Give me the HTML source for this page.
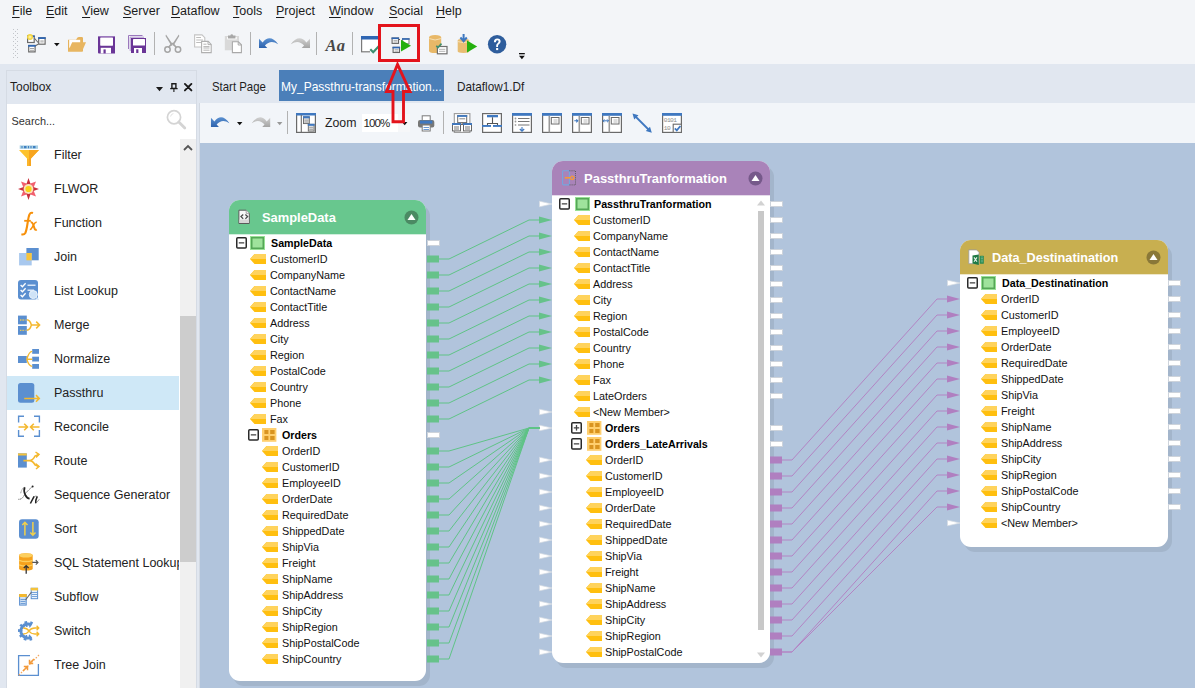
<!DOCTYPE html><html><head><meta charset="utf-8"><style>
*{margin:0;padding:0;box-sizing:border-box}
html,body{width:1195px;height:688px;overflow:hidden}
body{background:#f3f5f8;font-family:"Liberation Sans", sans-serif;position:relative;color:#1e1e1e}
.t{position:absolute;white-space:nowrap}
.a{position:absolute}
svg{position:absolute;overflow:visible}
u{text-decoration:none;border-bottom:1px solid currentColor}
</style></head><body><div class="t" style="left:12px;top:3px;font-size:12.5px;line-height:16px;color:#1b1b1b"><span style="text-decoration:underline;text-underline-offset:2px">F</span>ile</div>
<div class="t" style="left:46px;top:3px;font-size:12.5px;line-height:16px;color:#1b1b1b"><span style="text-decoration:underline;text-underline-offset:2px">E</span>dit</div>
<div class="t" style="left:82px;top:3px;font-size:12.5px;line-height:16px;color:#1b1b1b"><span style="text-decoration:underline;text-underline-offset:2px">V</span>iew</div>
<div class="t" style="left:123px;top:3px;font-size:12.5px;line-height:16px;color:#1b1b1b"><span style="text-decoration:underline;text-underline-offset:2px">S</span>erver</div>
<div class="t" style="left:171px;top:3px;font-size:12.5px;line-height:16px;color:#1b1b1b"><span style="text-decoration:underline;text-underline-offset:2px">D</span>ataflow</div>
<div class="t" style="left:233px;top:3px;font-size:12.5px;line-height:16px;color:#1b1b1b"><span style="text-decoration:underline;text-underline-offset:2px">T</span>ools</div>
<div class="t" style="left:276px;top:3px;font-size:12.5px;line-height:16px;color:#1b1b1b"><span style="text-decoration:underline;text-underline-offset:2px">P</span>roject</div>
<div class="t" style="left:329px;top:3px;font-size:12.5px;line-height:16px;color:#1b1b1b"><span style="text-decoration:underline;text-underline-offset:2px">W</span>indow</div>
<div class="t" style="left:389px;top:3px;font-size:12.5px;line-height:16px;color:#1b1b1b"><span style="text-decoration:underline;text-underline-offset:2px">S</span>ocial</div>
<div class="t" style="left:436px;top:3px;font-size:12.5px;line-height:16px;color:#1b1b1b"><span style="text-decoration:underline;text-underline-offset:2px">H</span>elp</div>
<svg style="left:13px;top:29px" width="6" height="30"><rect x="0" y="0" width="1" height="1" fill="#c2c5ca"/><rect x="4" y="0" width="1" height="1" fill="#c2c5ca"/><rect x="0" y="4" width="1" height="1" fill="#c2c5ca"/><rect x="4" y="4" width="1" height="1" fill="#c2c5ca"/><rect x="0" y="8" width="1" height="1" fill="#c2c5ca"/><rect x="4" y="8" width="1" height="1" fill="#c2c5ca"/><rect x="0" y="12" width="1" height="1" fill="#c2c5ca"/><rect x="4" y="12" width="1" height="1" fill="#c2c5ca"/><rect x="0" y="16" width="1" height="1" fill="#c2c5ca"/><rect x="4" y="16" width="1" height="1" fill="#c2c5ca"/><rect x="0" y="20" width="1" height="1" fill="#c2c5ca"/><rect x="4" y="20" width="1" height="1" fill="#c2c5ca"/><rect x="0" y="24" width="1" height="1" fill="#c2c5ca"/><rect x="4" y="24" width="1" height="1" fill="#c2c5ca"/><rect x="0" y="28" width="1" height="1" fill="#c2c5ca"/><rect x="4" y="28" width="1" height="1" fill="#c2c5ca"/><rect x="2" y="2" width="1" height="1" fill="#c2c5ca"/><rect x="2" y="6" width="1" height="1" fill="#c2c5ca"/><rect x="2" y="10" width="1" height="1" fill="#c2c5ca"/><rect x="2" y="14" width="1" height="1" fill="#c2c5ca"/><rect x="2" y="18" width="1" height="1" fill="#c2c5ca"/><rect x="2" y="22" width="1" height="1" fill="#c2c5ca"/><rect x="2" y="26" width="1" height="1" fill="#c2c5ca"/></svg>
<svg style="left:27px;top:34px" width="22" height="20">
<path d="M7.2 4 L11.1 8.5 M11.1 10.2 L8 12" stroke="#6a6a6a" stroke-width="1.1" fill="none"/>
<rect x="0.6" y="2.1" width="6.6" height="6.4" fill="#fff" stroke="#6a6a6a" stroke-width="1.2"/><rect x="0" y="1.5" width="7.8" height="1.6" fill="#2f66b3"/>
<rect x="11.7" y="3.8" width="6.4" height="6.4" fill="#fff" stroke="#6a6a6a" stroke-width="1.2"/><rect x="11.1" y="3.2" width="7.6" height="1.8" fill="#2f66b3"/><rect x="13.3" y="6.2" width="3.4" height="2.4" fill="#c4c4c4"/>
<rect x="1.7" y="11.5" width="6.4" height="6.4" fill="#fff" stroke="#6a6a6a" stroke-width="1.2"/><rect x="1.1" y="10.9" width="7.6" height="1.8" fill="#2f66b3"/><path d="M3 14.5H7 M3 16.3H7" stroke="#9a9a9a" stroke-width="0.9"/>
<circle cx="3" cy="3" r="3" fill="#f5d640"/><circle cx="3" cy="3" r="1.6" fill="#fbec9a"/>
</svg>
<svg style="left:53.5px;top:43px" width="6" height="4"><path d="M0 0H5.6L2.8 3.2Z" fill="#111"/></svg>
<svg style="left:68px;top:37px" width="19" height="15"><path d="M0 2.8 H8 L9.5 0.6 Q10 0 11 0 H13.8 Q15 0 15 1.2 V14.5 H0Z" fill="#e6b35d"/><rect x="1.2" y="2.8" width="11" height="8" fill="#fff"/><path d="M4.2 5.2 H18 L14 14.5 H0 Z" fill="#e8b661"/></svg>
<svg style="left:98px;top:35.6px" width="18" height="18"><path d="M0 0H17V17.4H1Q0 17.4 0 16.4Z" fill="#6a3597"/><rect x="0" y="0" width="17" height="1" fill="#9b78bd"/><rect x="2.2" y="1.4" width="12.8" height="8.3" rx="0.6" fill="#fff"/><rect x="2.7" y="11.8" width="10.3" height="5.6" fill="#fff"/><rect x="5.5" y="13.4" width="2.2" height="4" fill="#6a3597"/></svg>
<svg style="left:128px;top:35px" width="19" height="19"><path d="M0.5 0.5H14.5 M0.5 0.5V14" stroke="#9b78bd" stroke-width="1"/><path d="M2.2 2.2H16 M2.2 2.2V16" stroke="#b59ad0" stroke-width="1"/><path d="M3 3H18V18H3Z" fill="#6a3597"/><rect x="5" y="4" width="12" height="6.5" rx="0.6" fill="#fff"/><rect x="6" y="13" width="8" height="5" fill="#fff"/><rect x="8.2" y="14.3" width="2.2" height="3.7" fill="#6a3597"/></svg>
<div class="a" style="left:154px;top:32px;width:1px;height:23px;background:#b2b2b2"></div>
<svg style="left:164px;top:34px" width="19" height="20"><path d="M2 0.5 L8.8 10.5 L7.5 12 L1.5 2Z M14.8 0.5 L8 10.5 L9.3 12 L15.3 2Z" fill="#a5a5a5"/><path d="M8.4 9 L4.5 13.5 M8.4 9 L12.3 13.5" stroke="#a5a5a5" stroke-width="1.6"/><circle cx="3.5" cy="15.5" r="2.7" fill="none" stroke="#a5a5a5" stroke-width="1.5"/><circle cx="14" cy="15.5" r="2.7" fill="none" stroke="#a5a5a5" stroke-width="1.5"/></svg>
<svg style="left:194px;top:34px" width="19" height="20"><path d="M0.6 0.9H8L10.8 3.7V13H0.6Z" fill="#fff" stroke="#c4c4c4" stroke-width="1.1"/><path d="M2.2 3.5H7 M2.2 6H9 M2.2 8.5H9" stroke="#bdbdbd" stroke-width="1.1"/><path d="M7.6 7.4H14.2L17.2 10.4V18.6H7.6Z" fill="#fff" stroke="#b0b0b0" stroke-width="1.1"/><path d="M14 7.4V10.6H17.2" fill="none" stroke="#b0b0b0" stroke-width="1"/><path d="M9.4 10.2H12.5 M9.4 12.6H15.5 M9.4 14H15.5 M9.4 16.2H15.5" stroke="#b5b5b5" stroke-width="1"/></svg>
<svg style="left:224px;top:34px" width="20" height="20"><rect x="0.8" y="2" width="14.2" height="14.3" fill="#d9d9d9"/><rect x="3.2" y="3" width="9.5" height="2.4" fill="#fff"/><path d="M4 1.5H11.5V4.5H4Z" fill="#a8a8a8"/><circle cx="7.75" cy="1.5" r="1.3" fill="#a8a8a8"/><path d="M8.4 7.8H14.4L17.4 10.8V18.6H8.4Z" fill="#fff" stroke="#a9a9a9" stroke-width="1.1"/><path d="M14.2 7.8V11H17.4" fill="none" stroke="#a9a9a9" stroke-width="1"/></svg>
<div class="a" style="left:250px;top:32px;width:1px;height:23px;background:#b2b2b2"></div>
<svg style="left:258px;top:36px" width="22" height="14"><defs><linearGradient id="gu" x1="0" y1="0" x2="0" y2="1"><stop offset="0" stop-color="#5a90d0"/><stop offset="1" stop-color="#2d62ad"/></linearGradient></defs><path d="M1 2.8 L4.6 6.4 Q12 -2.6 20.2 8.2 Q12.5 3.2 6.9 9.6 L9.3 12 L1 12 Z" fill="url(#gu)"/></svg>
<svg style="left:289.5px;top:36px" width="22" height="14"><defs><linearGradient id="gr" x1="0" y1="0" x2="0" y2="1"><stop offset="0" stop-color="#d0d0d0"/><stop offset="1" stop-color="#a4a4a4"/></linearGradient></defs><path d="M20 2.8 L16.4 6.4 Q9 -2.6 0.8 8.2 Q8.5 3.2 14.1 9.6 L11.7 12 L20 12 Z" fill="url(#gr)"/></svg>
<div class="a" style="left:316px;top:32px;width:1px;height:23px;background:#b2b2b2"></div>
<div class="t" style="left:325.5px;top:37px;font-family:'Liberation Serif',serif;font-style:italic;font-weight:bold;font-size:16.5px;line-height:18px;color:#474747;letter-spacing:0.3px">Aa</div>
<div class="a" style="left:352px;top:32px;width:1px;height:23px;background:#b2b2b2"></div>
<svg style="left:361px;top:36px" width="19" height="18"><rect x="0.6" y="0.6" width="17" height="15.2" fill="#fff" stroke="#7a7a7a" stroke-width="1.2"/><rect x="0" y="0" width="18" height="3.5" fill="#2f66b3"/><rect x="9" y="15" width="9" height="3" fill="#f3f5f8"/><path d="M9.3 13.3 L12.2 16.2 L18 10" stroke="#3e8f70" stroke-width="2.2" fill="none"/></svg>
<svg style="left:391px;top:35px" width="22" height="18"><path d="M7.5 3.5 L9 5" stroke="#555" stroke-width="1"/>
<rect x="1.1" y="3" width="6.4" height="5.4" fill="#fff" stroke="#666" stroke-width="1.1"/><rect x="0.5" y="2.5" width="7.6" height="1.6" fill="#2f66b3"/><path d="M2.5 5.6H6.5 M2.5 7H6.5" stroke="#999" stroke-width="0.8"/>
<rect x="11.6" y="3.8" width="6.4" height="5" fill="#fff" stroke="#888" stroke-width="1.1"/><rect x="11" y="3.2" width="7.6" height="1.6" fill="#2f66b3"/>
<rect x="2.1" y="12.3" width="6.4" height="5.2" fill="#fff" stroke="#666" stroke-width="1.1"/><rect x="1.5" y="11.8" width="7.6" height="1.6" fill="#2f66b3"/><path d="M3.5 14.7H7.5 M3.5 16.2H7.5" stroke="#999" stroke-width="0.8"/>
<path d="M10 4.8 L20 10.7 L10 16.6Z" fill="#24b00e"/></svg>
<div class="a" style="left:378px;top:24px;width:42px;height:38px;border:3px solid #e3141c"></div>
<svg style="left:429px;top:34.7px" width="19" height="20"><path d="M0 2.6 Q0 0 6.1 0 Q12.2 0 12.2 2.6 V15.4 Q12.2 18.1 6.1 18.1 Q0 18.1 0 15.4Z" fill="#e8b868"/><path d="M0.3 3.6 Q6.1 6.4 11.9 3.6" stroke="#f6e0b4" stroke-width="1" fill="none"/><rect x="8.4" y="11.5" width="9.6" height="7.3" fill="#fff" stroke="#6f6f6f" stroke-width="1.2"/><path d="M10 14.3H16.3 M10 16.3H16.3" stroke="#aaa" stroke-width="0.9"/><path d="M7.3 10.8 L9 12.5 L12.5 8.6" stroke="#3e8f70" stroke-width="1.6" fill="none"/></svg>
<svg style="left:457px;top:33.8px" width="21" height="20"><path d="M0.7 6.6 Q0.7 4.8 6.5 4.8 Q12.3 4.8 12.3 6.6 V17.3 Q12.3 19 6.5 19 Q0.7 19 0.7 17.3Z" fill="#e8bd72"/><path d="M1 7.6 Q6.5 9.8 12 7.6" stroke="#f6e0b4" stroke-width="1" fill="none"/><path d="M6.6 0 V6.5 M3.4 3.5 L6.6 7.2 L9.8 3.5" stroke="#3e78c0" stroke-width="2" fill="none"/><path d="M10 6.6 L20.2 12.6 L10 18.6Z" fill="#24b00e"/></svg>
<svg style="left:488px;top:34.7px" width="19" height="19"><circle cx="9.1" cy="9.3" r="9.2" fill="#2e5d9c"/><path d="M5.9 7.2 Q5.9 3.6 9.3 3.6 Q12.6 3.6 12.6 6.6 Q12.6 8.3 10.9 9.3 Q10 9.9 10 11.2 V11.9 H8.2 V10.8 Q8.2 9 9.5 8.2 Q10.6 7.5 10.6 6.6 Q10.6 5.3 9.3 5.3 Q7.9 5.3 7.9 7.2Z" fill="#fff"/><rect x="8.1" y="13" width="2.1" height="2.1" fill="#fff"/></svg>
<svg style="left:518.5px;top:52.8px" width="6" height="7"><rect x="0" y="0" width="5.8" height="1.3" fill="#111"/><path d="M0 2.8H5.8L2.9 6.2Z" fill="#111"/></svg>
<svg style="left:0;top:0;z-index:20" width="1195" height="688"><path d="M397.5 64.5 L386.5 91.5 L393 91.5 L393 121.8 L403.5 121.8 L403.5 91.5 L410 91.5Z" fill="none" stroke="#e3141c" stroke-width="2.9" stroke-linejoin="miter"/></svg>
<div class="a" style="left:0;top:64px;width:1195px;height:624px;background:#e1e7f0"></div>
<div class="a" style="left:200px;top:103px;width:995px;height:40px;background:#f2f5f9"></div>
<div class="a" style="left:199px;top:103px;width:1px;height:585px;background:#d3d9e2"></div>
<div class="a" style="left:200px;top:143px;width:995px;height:545px;background:#b1c4dc"></div>
<div class="a" style="left:6px;top:70px;width:191px;height:625px;background:#fff;border:1px solid #d5dbe4"></div>
<div class="a" style="left:7px;top:71px;width:189px;height:33px;background:#e1e7f0"></div>
<div class="t" style="left:10px;top:79.0px;font-size:12px;line-height:16px;font-weight:normal;color:#1e1e1e;">Toolbox</div>
<svg style="left:156px;top:86.8px" width="8" height="5"><path d="M0 0H7L3.5 4.2Z" fill="#1a1a1a"/></svg>
<svg style="left:170px;top:83px" width="8" height="10"><path d="M1.9 0.8H5.9V5.4H1.9Z" fill="none" stroke="#1a1a1a" stroke-width="1.4"/><path d="M0.2 5.6H7.6" stroke="#1a1a1a" stroke-width="1.3"/><path d="M3.9 5.6V9" stroke="#1a1a1a" stroke-width="1.1"/></svg>
<svg style="left:184px;top:83px" width="8.5" height="8.5"><path d="M0.9 0.9L7.4 7.4 M7.4 0.9L0.9 7.4" stroke="#1a1a1a" stroke-width="1.9" stroke-linecap="round" fill="none"/><rect x="2.9" y="2.9" width="2.7" height="2.7" fill="#1a1a1a"/></svg>
<div class="t" style="left:11.5px;top:112.5px;font-size:10.9px;line-height:16px;font-weight:normal;color:#333;">Search...</div>
<svg style="left:165px;top:109px" width="22" height="22"><circle cx="9" cy="8.2" r="6.6" fill="none" stroke="#d4d4d4" stroke-width="1.7"/><path d="M13.8 13 L19.8 19" stroke="#d4d4d4" stroke-width="2.8" stroke-linecap="round"/><path d="M5.6 7.5 Q6 5 8.4 4.6" stroke="#e2e2e2" stroke-width="1" fill="none"/></svg>
<div class="a" style="left:180px;top:139px;width:16px;height:549px;background:#f0f0f0"></div>
<svg style="left:183px;top:144px" width="10" height="8"><path d="M1 6 L5 2 L9 6" stroke="#555" stroke-width="1.8" fill="none"/></svg>
<div class="a" style="left:180px;top:316px;width:16px;height:246px;background:#cdcdcd"></div>
<div class="a" style="left:7px;top:376px;width:172px;height:34px;background:#cfe8f7"></div>
<div class="t" style="left:54px;top:146.0px;font-size:12.5px;line-height:18px;font-weight:normal;color:#222;">Filter</div>
<svg style="left:18px;top:144px" width="22" height="22"><rect x="1.7" y="1.4" width="18.3" height="3.4" fill="#a9cfe3"/><path d="M3.5 2H4.5V4.2H3.5Z M6 2H8.5V4.2H6Z M10 2H11V4.2H10Z M12.5 2H13.5V4.2H12.5Z M15 2H17.5V4.2H15Z" fill="#3f7fc1"/><path d="M1 6H21L13 14.5V16H9V14.5Z" fill="#fdc22e"/><path d="M11 6H21L13 14.5V16H11Z" fill="#f7a51f"/><rect x="9" y="15.5" width="4" height="6.5" fill="#f7a51f"/><rect x="9" y="15.5" width="2" height="6.5" fill="#fbb529"/></svg>
<div class="t" style="left:54px;top:180.0px;font-size:12.5px;line-height:18px;font-weight:normal;color:#222;">FLWOR</div>
<svg style="left:18px;top:178px" width="22" height="22"><path d="M3 3.5 L10.5 6.2 L18 3.5 L15 11 L18 18.5 L10.5 15.8 L3 18.5 L6 11Z" fill="#f2606e"/><path d="M10.5 0 L13.3 8.2 L21 11 L13.3 13.8 L10.5 22 L7.7 13.8 L0 11 L7.7 8.2Z" fill="#c9303c"/><circle cx="10.5" cy="11" r="4.9" fill="#fbe3b8"/><circle cx="10.5" cy="11" r="3.1" fill="#f9d318"/></svg>
<div class="t" style="left:54px;top:214.0px;font-size:12.5px;line-height:18px;font-weight:normal;color:#222;">Function</div>
<svg style="left:18px;top:212px" width="22" height="22"><path d="M15 1 Q12.6 0.2 11.5 2.4 Q10.6 4.4 9.6 11 Q8.5 18.5 7.3 21 Q6.2 23 3.4 22.3" stroke="#f7900a" stroke-width="2.1" fill="none"/><path d="M6.2 8.8H12.8" stroke="#f7900a" stroke-width="1.8"/><path d="M12.6 10.2 Q14.2 9.8 15 12 L16.6 16.6 Q17.2 18.4 18.8 17.6" stroke="#f7900a" stroke-width="2" fill="none"/><path d="M18.7 10.2 Q17.4 10 16.2 11.8 L14 15.6 Q13 17.6 11.8 17.4" stroke="#f7900a" stroke-width="1.5" fill="none"/></svg>
<div class="t" style="left:54px;top:248.0px;font-size:12.5px;line-height:18px;font-weight:normal;color:#222;">Join</div>
<svg style="left:18px;top:246px" width="22" height="22"><rect x="8.4" y="2" width="12.3" height="12.3" fill="#5b8fd0"/><rect x="1.1" y="7" width="12.6" height="12.4" fill="#a8c8ee"/><rect x="8.4" y="7" width="5.3" height="7.3" fill="#f8c43a"/></svg>
<div class="t" style="left:54px;top:282.0px;font-size:12.5px;line-height:18px;font-weight:normal;color:#222;">List Lookup</div>
<svg style="left:18px;top:280px" width="22" height="22"><rect x="0" y="0" width="20" height="19.6" rx="3" fill="#5b8fd0"/><path d="M2.6 5 L4.4 6.8 L7.6 3.2 M2.6 10 L4.4 11.8 L7.6 8.2 M2.6 15 L4.4 16.8 L7.6 13.2" stroke="#fff" stroke-width="1.3" fill="none"/><path d="M9.5 5.2H17.5 M9.5 10.2H16" stroke="#d8e6f7" stroke-width="1.6"/><circle cx="15.3" cy="14.6" r="4" fill="#cfe3f7" stroke="#e9f2fb" stroke-width="1"/><path d="M18 17.3 L20.5 19.8" stroke="#cfe3f7" stroke-width="1.4"/></svg>
<div class="t" style="left:54px;top:316.0px;font-size:12.5px;line-height:18px;font-weight:normal;color:#222;">Merge</div>
<svg style="left:18px;top:314px" width="22" height="22"><rect x="0" y="1.6" width="8.8" height="8.7" fill="#5b8fd0"/><rect x="0" y="12" width="8.8" height="8.8" fill="#5b8fd0"/><path d="M2 6H7.5 M2 16.4H7.5" stroke="#e9c75a" stroke-width="1.4" stroke-dasharray="1.4 1"/><path d="M8.8 5.8 Q12 6 13.4 11 Q12 16 8.8 16.3 M13.4 11H21.6 M18.2 7.6L21.6 11L18.2 14.4" stroke="#f4b82e" stroke-width="1.5" fill="none"/></svg>
<div class="t" style="left:54px;top:350.0px;font-size:12.5px;line-height:18px;font-weight:normal;color:#222;">Normalize</div>
<svg style="left:18px;top:348px" width="22" height="22"><rect x="0" y="8" width="8.8" height="7" fill="#5b8fd0"/><rect x="14.2" y="1" width="6.8" height="4.8" fill="#5b8fd0"/><rect x="14.2" y="8.7" width="6.8" height="4.8" fill="#5b8fd0"/><rect x="14.2" y="16" width="6.8" height="4.8" fill="#5b8fd0"/><path d="M8.8 11.4 Q11 3.4 14.2 3.4 M8.8 11.2H14.2 M8.8 11.4 Q11 18.4 14.2 18.4" stroke="#f4b82e" stroke-width="1.4" fill="none"/></svg>
<div class="t" style="left:54px;top:384.0px;font-size:12.5px;line-height:18px;font-weight:normal;color:#222;">Passthru</div>
<svg style="left:18px;top:382px" width="22" height="22"><rect x="0" y="1" width="16.3" height="19.8" rx="2.5" fill="#5b8fd0"/><path d="M6.2 16.4H21.3 M18 13.1L21.3 16.4L18 19.7" stroke="#f4b82e" stroke-width="1.5" fill="none"/></svg>
<div class="t" style="left:54px;top:418.0px;font-size:12.5px;line-height:18px;font-weight:normal;color:#222;">Reconcile</div>
<svg style="left:18px;top:416px" width="22" height="22"><path d="M6 0.3H0.6V6.5 M0.6 14V20.2H6 M16 0.3H21.4V6.5 M21.4 14V20.2H16" stroke="#5b8fd0" stroke-width="1.4" fill="none"/><path d="M0.5 11H9.5 M6.2 7.7L9.5 11L6.2 14.3 M21.5 11H12.5 M15.8 7.7L12.5 11L15.8 14.3" stroke="#f4b82e" stroke-width="1.6" fill="none"/></svg>
<div class="t" style="left:54px;top:452.0px;font-size:12.5px;line-height:18px;font-weight:normal;color:#222;">Route</div>
<svg style="left:18px;top:450px" width="22" height="22"><rect x="0" y="3.4" width="8.8" height="14.2" fill="#5b8fd0"/><rect x="0" y="3.4" width="8.8" height="2.1" fill="#f4c23a"/><path d="M5.4 10.6H11.3 Q15 10.6 17 6 L20.7 4.5 M11.3 10.6 Q15 10.6 17 15 L20.7 16.5" stroke="#f4b82e" stroke-width="1.6" fill="none"/><path d="M17.5 2 L21 4.4 L18 7.4 M17.5 13.6 L21 16.6 L18 19" stroke="#f4b82e" stroke-width="1.5" fill="none"/></svg>
<div class="t" style="left:54px;top:486.0px;font-size:12.5px;line-height:18px;font-weight:normal;color:#222;">Sequence Generator</div>
<svg style="left:18px;top:484px" width="22" height="22"><path d="M6.7 3.3 Q5.3 7 7.3 11 Q9 14.4 11.6 14.6" stroke="#222" stroke-width="1.7" fill="none"/><path d="M2.7 9.2 Q3.8 4.2 6.9 3.2" stroke="#555" stroke-width="0.7" stroke-dasharray="0.9 0.6" fill="none"/><path d="M14.6 2.5 Q8.5 7.5 5.8 12 Q3.8 15.6 0.3 15.3" stroke="#444" stroke-width="0.8" stroke-dasharray="1.2 0.5" fill="none"/><circle cx="14.6" cy="2.6" r="1" fill="#222"/><path d="M12.4 19.5 L16.1 12.4 M19.3 12.4 Q17.4 16 17.7 19.2" stroke="#222" stroke-width="1.5" fill="none"/><path d="M15.9 13 Q17.5 11.6 19.3 12.4 M17.7 19.2 Q19.6 17.8 21.4 15.2" stroke="#666" stroke-width="0.7" fill="none"/></svg>
<div class="t" style="left:54px;top:520.0px;font-size:12.5px;line-height:18px;font-weight:normal;color:#222;">Sort</div>
<svg style="left:18px;top:518px" width="22" height="22"><rect x="1" y="1.2" width="19.7" height="19.6" rx="3" fill="#5b8fd0"/><path d="M6.9 17.5V4.3 M4.3 7L6.9 4.3L9.5 7 M14.9 4V17.2 M12.3 14.5L14.9 17.2L17.5 14.5" stroke="#f2d04a" stroke-width="1.5" fill="none"/></svg>
<div class="t" style="left:54px;top:554px;width:125px;overflow:hidden;font-size:12.5px;line-height:18px;color:#222">SQL Statement Lookup</div>
<svg style="left:18px;top:552px" width="22" height="22"><path d="M1.1 3.2 Q1.1 1.2 7.9 1.2 Q14.7 1.2 14.7 3.2 V16.5 Q14.7 18.5 7.9 18.5 Q1.1 18.5 1.1 16.5Z" fill="#f5a11c"/><ellipse cx="7.9" cy="3.4" rx="6.8" ry="2.2" fill="#fccf5e"/><path d="M1.1 8.3 Q7.9 10.8 14.7 8.3 M1.1 12.8 Q7.9 15.3 14.7 12.8" stroke="#fccf5e" stroke-width="1.4" fill="none"/><path d="M8.2 21.8V13.6 M5.8 16L8.2 13.6L10.6 16" stroke="#333" stroke-width="1.3" fill="none"/><path d="M14.2 10.4H20 M17.8 8.2L20 10.4L17.8 12.6" stroke="#555" stroke-width="1.1" fill="none"/></svg>
<div class="t" style="left:54px;top:588.0px;font-size:12.5px;line-height:18px;font-weight:normal;color:#222;">Subflow</div>
<svg style="left:18px;top:586px" width="22" height="22"><rect x="1.6" y="8.5" width="6.6" height="10.6" fill="#cfe0f3" stroke="#5b8fd0"/><rect x="1.1" y="8" width="7.6" height="3" fill="#f4b82e"/><path d="M2.5 13.5H7.5 M2.5 15.5H7.5 M2.5 17.5H7.5" stroke="#5b8fd0" stroke-width="0.8"/><rect x="13.2" y="2.3" width="6.4" height="10.4" fill="#eaf2fb" stroke="#5b8fd0"/><rect x="12.7" y="1.8" width="7.3" height="2.6" fill="#f4c23a"/><path d="M14 6.5H19 M14 8.5H19 M14 10.5H19" stroke="#5b8fd0" stroke-width="0.8"/><path d="M7.5 14 L13.5 6" stroke="#666" stroke-width="1.1" fill="none"/></svg>
<div class="t" style="left:54px;top:622.0px;font-size:12.5px;line-height:18px;font-weight:normal;color:#222;">Switch</div>
<svg style="left:18px;top:620px" width="22" height="22"><path d="M13.6 5 A7 7 0 1 0 13.6 17" stroke="#5b8fd0" stroke-width="3.2" fill="none"/><path d="M13.6 5 A7 7 0 1 0 13.6 17" stroke="#5b8fd0" stroke-width="6" stroke-dasharray="2 2.4" fill="none"/><circle cx="8.5" cy="11" r="4" fill="#fff"/><path d="M5.2 8 Q9 8 11 11 Q13 14 17 14 H20.8 M5.2 14 Q9 14 11 11 Q13 8 17 8 H20.8 M18.6 5.8L20.8 8L18.6 10.2 M18.6 11.8L20.8 14L18.6 16.2" stroke="#f4b82e" stroke-width="1.3" fill="none"/></svg>
<div class="t" style="left:54px;top:656.0px;font-size:12.5px;line-height:18px;font-weight:normal;color:#222;">Tree Join</div>
<svg style="left:18px;top:654px" width="22" height="22"><path d="M12 1.6H0.6V21.4H20.4V10" stroke="#5b8fd0" stroke-width="1.3" fill="none"/><path d="M21 1 L0.5 21.5" stroke="#f4a962" stroke-width="1.2" stroke-dasharray="1.6 1.4" fill="none"/><path d="M16 5 L11.5 9.5 M11.5 5.8V9.5H15.2 M5 17 L9.5 12.5 M9.5 16.2V12.5H5.8" stroke="#f39a3a" stroke-width="1.5" fill="none"/></svg>
<div class="t" style="left:212px;top:78px;font-size:12.2px;line-height:18px;color:#1e1e1e;transform-origin:0 0;transform:scaleX(0.935)">Start Page</div>
<div class="a" style="left:279px;top:70px;width:165px;height:31px;background:#4b7fb9"></div>
<div class="t" style="left:281px;top:78px;font-size:12.2px;line-height:18px;color:#fff;transform-origin:0 0;transform:scaleX(0.985)">My_Passthru-transformation...</div>
<div class="t" style="left:457px;top:78px;font-size:12.2px;line-height:18px;color:#1e1e1e;transform-origin:0 0;transform:scaleX(0.965)">Dataflow1.Df</div>
<svg style="left:209.5px;top:115px" width="21" height="13"><defs><linearGradient id="gu2" x1="0" y1="0" x2="0" y2="1"><stop offset="0" stop-color="#5a90d0"/><stop offset="1" stop-color="#2d62ad"/></linearGradient></defs><g transform="scale(0.96,1)"><path d="M1 2.8 L4.6 6.4 Q12 -2.6 20.2 8.2 Q12.5 3.2 6.9 9.6 L9.3 12 L1 12 Z" fill="url(#gu2)"/></g></svg>
<svg style="left:237px;top:122px" width="6" height="4"><path d="M0 0H5.4L2.7 3.3Z" fill="#111"/></svg>
<svg style="left:250.5px;top:115px" width="21" height="13"><defs><linearGradient id="gr2" x1="0" y1="0" x2="0" y2="1"><stop offset="0" stop-color="#d0d0d0"/><stop offset="1" stop-color="#a4a4a4"/></linearGradient></defs><g transform="scale(0.96,1)"><path d="M20 2.8 L16.4 6.4 Q9 -2.6 0.8 8.2 Q8.5 3.2 14.1 9.6 L11.7 12 L20 12 Z" fill="url(#gr2)"/></g></svg>
<svg style="left:277px;top:122px" width="6" height="4"><path d="M0 0H5.4L2.7 3.3Z" fill="#999"/></svg>
<div class="a" style="left:287px;top:111px;width:1px;height:23px;background:#b2b2b2"></div>
<svg style="left:296px;top:113px" width="21" height="21"><rect x="0.6" y="0.6" width="18.8" height="18.8" fill="#fff" stroke="#6a6a6a" stroke-width="1.2"/><rect x="0" y="0" width="20" height="2.5" fill="#3f78c0"/><path d="M5.3 2V20" stroke="#6a6a6a" stroke-width="1.1"/>
<rect x="7.5" y="3.8" width="5.8" height="6.8" fill="#ddd" stroke="#666" stroke-width="0.9"/><rect x="7" y="3.3" width="6.8" height="2" fill="#3f78c0"/><path d="M8.5 7.2H12.5 M8.5 9H12.5" stroke="#999" stroke-width="0.8"/>
<rect x="12.3" y="11.3" width="5.8" height="6.8" fill="#ddd" stroke="#666" stroke-width="0.9"/><rect x="11.8" y="10.8" width="6.8" height="2" fill="#3f78c0"/><path d="M13.3 14.6H17.3 M13.3 16.4H17.3" stroke="#999" stroke-width="0.8"/></svg>
<div class="t" style="left:325px;top:114.0px;font-size:12.3px;line-height:18px;font-weight:normal;color:#1e1e1e;">Zoom</div>
<div class="a" style="left:362px;top:114px;width:48px;height:17.5px;background:#fff"></div>
<div class="a" style="left:398px;top:114px;width:12px;height:17.5px;background:#f6f7f9"></div>
<div class="t" style="left:363.5px;top:114.0px;font-size:11.5px;line-height:18px;font-weight:normal;color:#1e1e1e;letter-spacing:-0.9px">100%</div>
<svg style="left:401.5px;top:121.5px" width="7" height="4"><path d="M0 0H5.4L2.7 3.3Z" fill="#111"/></svg>
<svg style="left:418px;top:115px" width="17" height="17"><rect x="4.2" y="0.8" width="8" height="5" fill="#fff" stroke="#7a7a7a" stroke-width="1"/><rect x="0" y="5" width="16.3" height="7.5" rx="2" fill="#777"/><rect x="2" y="5.6" width="12.3" height="3" fill="#3f78c0"/><rect x="4.2" y="10" width="8" height="6" fill="#fff" stroke="#7a7a7a" stroke-width="1"/><path d="M5.5 12.5H11 M5.5 14.5H11" stroke="#5a8fd0" stroke-width="0.9"/></svg>
<div class="a" style="left:443px;top:111px;width:1px;height:23px;background:#b2b2b2"></div>
<svg style="left:452px;top:113px" width="21" height="21"><rect x="2.3" y="0.6" width="15.6" height="18.8" fill="#fff" stroke="#9a9a9a" stroke-width="1.1"/><rect x="5.7" y="2.6" width="9" height="7" fill="#fff" stroke="#6a6a6a" stroke-width="1"/><rect x="5.2" y="2.1" width="10" height="1.8" fill="#3f78c0"/><path d="M7.3 5.8H13.2" stroke="#777" stroke-width="0.9" fill="none"/><path d="M10.2 9.6V11.5 M4.3 11.5H15.8" stroke="#666" stroke-width="1" fill="none"/><rect x="0.5" y="10.6" width="8" height="7.3" fill="#fff" stroke="#666" stroke-width="1"/><rect x="0" y="10.1" width="9" height="1.9" fill="#3f78c0"/><path d="M2 14H7 M2 16H7" stroke="#666" stroke-width="0.9" fill="none"/><rect x="11.5" y="10.6" width="8" height="7.3" fill="#fff" stroke="#666" stroke-width="1"/><rect x="11" y="10.1" width="9" height="1.9" fill="#3f78c0"/><path d="M13 14H18 M13 16H18" stroke="#666" stroke-width="0.9" fill="none"/></svg>
<svg style="left:482px;top:113px" width="21" height="21"><rect x="0.6" y="0.6" width="18.8" height="18.8" fill="#fff" stroke="#6a6a6a" stroke-width="1.2"/><rect x="5" y="2" width="11" height="2.3" fill="#3f78c0"/><path d="M10.5 4.3V10.5 M5.5 13V10.5H15.5V13" stroke="#555" stroke-width="1.1" fill="none"/><rect x="0" y="12" width="9" height="1.9" fill="#3f78c0"/><rect x="11" y="12" width="9" height="1.9" fill="#3f78c0"/></svg>
<svg style="left:512px;top:113px" width="21" height="21"><rect x="0.6" y="0.6" width="18.8" height="18.8" fill="#fff" stroke="#6a6a6a" stroke-width="1.2"/><rect x="0" y="0" width="20" height="2.8" fill="#3f78c0"/><circle cx="3.5" cy="5.5" r="0.9" fill="#999"/><circle cx="3.5" cy="8.5" r="0.9" fill="#999"/><circle cx="3.5" cy="12" r="0.9" fill="#aaa"/><path d="M6 5.5H17.5 M6 8.5H17.5 M6 12H17.5" stroke="#777" stroke-width="1.1" fill="none"/><path d="M10 14V18.2 M7.8 16L10 18.2L12.2 16" stroke="#3f78c0" stroke-width="1.1" fill="none"/></svg>
<svg style="left:542px;top:113px" width="21" height="21"><rect x="0.6" y="0.6" width="18.8" height="18.8" fill="#fff" stroke="#6a6a6a" stroke-width="1.2"/><rect x="0" y="0" width="20" height="2.8" fill="#3f78c0"/><path d="M7.3 2.8V19.5" stroke="#9a9a9a" stroke-width="1.6"/><rect x="9.3" y="4.5" width="7.7" height="6.5" fill="#fff" stroke="#6a6a6a" stroke-width="1"/><path d="M11.5 7H15.5 M11.5 9H15.5" stroke="#aaa" stroke-width="0.8" fill="none"/></svg>
<svg style="left:572px;top:113px" width="21" height="21"><rect x="0.6" y="0.6" width="18.8" height="18.8" fill="#fff" stroke="#6a6a6a" stroke-width="1.2"/><rect x="0" y="0" width="20" height="2.8" fill="#3f78c0"/><path d="M7.3 2.8V19.5" stroke="#9a9a9a" stroke-width="1.6"/><rect x="9.3" y="4.5" width="7.7" height="6.5" fill="#fff" stroke="#6a6a6a" stroke-width="1"/><path d="M11.5 7H15.5 M11.5 9H15.5" stroke="#aaa" stroke-width="0.8" fill="none"/><path d="M2.3 7.8H5.8 M4.3 6.3L5.8 7.8L4.3 9.3" stroke="#3f78c0" stroke-width="1.1" fill="none"/></svg>
<svg style="left:602px;top:113px" width="21" height="21"><rect x="0.6" y="0.6" width="18.8" height="18.8" fill="#fff" stroke="#6a6a6a" stroke-width="1.2"/><rect x="0" y="0" width="20" height="2.8" fill="#3f78c0"/><path d="M7.3 2.8V19.5" stroke="#9a9a9a" stroke-width="1.6"/><rect x="9.3" y="4.5" width="7.7" height="6.5" fill="#fff" stroke="#6a6a6a" stroke-width="1"/><path d="M11.5 7H15.5 M11.5 9H15.5" stroke="#aaa" stroke-width="0.8" fill="none"/><path d="M1 7.8H6.5 M2.4 6.4L1 7.8L2.4 9.2 M5.1 6.4L6.5 7.8L5.1 9.2" stroke="#3f78c0" stroke-width="1" fill="none"/></svg>
<svg style="left:632px;top:113px" width="21" height="21"><path d="M2.5 2.5 L17.5 17.5" stroke="#3f78c0" stroke-width="1.8" fill="none"/><path d="M0.5 0.5 L6.5 2.2 L2.2 6.5Z M19.8 19.8 L13.8 18 L18 13.8Z" fill="#3f78c0"/></svg>
<svg style="left:662px;top:113px" width="21" height="21"><rect x="0.6" y="0.6" width="18.8" height="18.8" fill="#fff" stroke="#6a6a6a" stroke-width="1.2"/><rect x="0" y="0" width="20" height="2.8" fill="#3f78c0"/><text x="1.8" y="9.3" font-family="Liberation Mono" font-size="6.2" fill="#8a8a8a" letter-spacing="-0.6">0101</text><text x="1.8" y="16.5" font-family="Liberation Mono" font-size="6.2" fill="#8a8a8a" letter-spacing="-0.6">10</text><rect x="11.2" y="11.2" width="8.2" height="8.2" fill="#fff" stroke="#6a6a6a" stroke-width="1.1"/><path d="M12.8 15.4L14.8 17.4L18.4 13" stroke="#3f78c0" stroke-width="1.7" fill="none"/></svg>
<div class="a" style="left:233px;top:205px;width:197px;height:481px;background:#a3b5cb;border-radius:11px"></div>
<div class="a" style="left:229px;top:200px;width:197px;height:481px;background:#fff;border-radius:11px;overflow:hidden"><div class="a" style="left:0;top:0;width:197px;height:34px;background:#68c78e"></div><div class="a" style="left:0;top:34px;width:197px;height:1px;background:#68c78e;opacity:0.3"></div></div>
<div class="t" style="left:261.5px;top:208.5px;font-size:13.5px;line-height:18px;font-weight:bold;color:#fff;transform-origin:0 0;transform:scaleX(0.955)">SampleData</div>
<svg style="left:404px;top:210.0px" width="15" height="15"><circle cx="7.5" cy="7.5" r="7" fill="#4b8a63"/><path d="M3.5 10 L7.5 4 L11.5 10Z" fill="#fff"/></svg>
<svg style="left:237px;top:209.0px" width="18" height="17"><path d="M1.9 1.2H9.2L12.3 4.3V14.5H1.9Z" fill="#f7f7f7" stroke="#5a5a5a" stroke-width="1"/><path d="M9.2 1.2V4.3H12.3" fill="#fff" stroke="#888" stroke-width="0.8"/><rect x="2.4" y="10.5" width="9.4" height="3.5" fill="#d6d6d6"/><path d="M6.2 5.5L4 7.6L6.2 9.7 M8.4 5.5L10.6 7.6L8.4 9.7" stroke="#4a4a4a" stroke-width="1.3" fill="none"/></svg>
<svg style="left:236px;top:237.2px" width="11" height="12"><rect x="0.75" y="0.75" width="9.5" height="10.2" rx="1" fill="#fff" stroke="#2a2a2a" stroke-width="1.5"/><path d="M2.8 5.85H8.2" stroke="#555" stroke-width="1.4"/></svg>
<svg style="left:250px;top:236px" width="15" height="14"><rect x="0" y="0" width="15" height="14" fill="#98e095"/><rect x="1.75" y="1.75" width="11.5" height="10.5" fill="#9fe39c" stroke="#55a757" stroke-width="1.5"/></svg>
<div class="t" style="left:271px;top:235.0px;font-size:10.7px;line-height:16px;font-weight:bold;color:#000;">SampleData</div>
<svg style="left:250px;top:254px" width="16" height="10"><path d="M0 5 L4.5 0 H16 V10 H4.5Z" fill="#ffbf0f"/><path d="M0 5 L4.5 0 H16 V5Z" fill="#ffd35c"/></svg>
<div class="t" style="left:270px;top:251.0px;font-size:10.8px;line-height:16px;font-weight:normal;color:#111;">CustomerID</div>
<svg style="left:250px;top:270px" width="16" height="10"><path d="M0 5 L4.5 0 H16 V10 H4.5Z" fill="#ffbf0f"/><path d="M0 5 L4.5 0 H16 V5Z" fill="#ffd35c"/></svg>
<div class="t" style="left:270px;top:267.0px;font-size:10.8px;line-height:16px;font-weight:normal;color:#111;">CompanyName</div>
<svg style="left:250px;top:286px" width="16" height="10"><path d="M0 5 L4.5 0 H16 V10 H4.5Z" fill="#ffbf0f"/><path d="M0 5 L4.5 0 H16 V5Z" fill="#ffd35c"/></svg>
<div class="t" style="left:270px;top:283.0px;font-size:10.8px;line-height:16px;font-weight:normal;color:#111;">ContactName</div>
<svg style="left:250px;top:302px" width="16" height="10"><path d="M0 5 L4.5 0 H16 V10 H4.5Z" fill="#ffbf0f"/><path d="M0 5 L4.5 0 H16 V5Z" fill="#ffd35c"/></svg>
<div class="t" style="left:270px;top:299.0px;font-size:10.8px;line-height:16px;font-weight:normal;color:#111;">ContactTitle</div>
<svg style="left:250px;top:318px" width="16" height="10"><path d="M0 5 L4.5 0 H16 V10 H4.5Z" fill="#ffbf0f"/><path d="M0 5 L4.5 0 H16 V5Z" fill="#ffd35c"/></svg>
<div class="t" style="left:270px;top:315.0px;font-size:10.8px;line-height:16px;font-weight:normal;color:#111;">Address</div>
<svg style="left:250px;top:334px" width="16" height="10"><path d="M0 5 L4.5 0 H16 V10 H4.5Z" fill="#ffbf0f"/><path d="M0 5 L4.5 0 H16 V5Z" fill="#ffd35c"/></svg>
<div class="t" style="left:270px;top:331.0px;font-size:10.8px;line-height:16px;font-weight:normal;color:#111;">City</div>
<svg style="left:250px;top:350px" width="16" height="10"><path d="M0 5 L4.5 0 H16 V10 H4.5Z" fill="#ffbf0f"/><path d="M0 5 L4.5 0 H16 V5Z" fill="#ffd35c"/></svg>
<div class="t" style="left:270px;top:347.0px;font-size:10.8px;line-height:16px;font-weight:normal;color:#111;">Region</div>
<svg style="left:250px;top:366px" width="16" height="10"><path d="M0 5 L4.5 0 H16 V10 H4.5Z" fill="#ffbf0f"/><path d="M0 5 L4.5 0 H16 V5Z" fill="#ffd35c"/></svg>
<div class="t" style="left:270px;top:363.0px;font-size:10.8px;line-height:16px;font-weight:normal;color:#111;">PostalCode</div>
<svg style="left:250px;top:382px" width="16" height="10"><path d="M0 5 L4.5 0 H16 V10 H4.5Z" fill="#ffbf0f"/><path d="M0 5 L4.5 0 H16 V5Z" fill="#ffd35c"/></svg>
<div class="t" style="left:270px;top:379.0px;font-size:10.8px;line-height:16px;font-weight:normal;color:#111;">Country</div>
<svg style="left:250px;top:398px" width="16" height="10"><path d="M0 5 L4.5 0 H16 V10 H4.5Z" fill="#ffbf0f"/><path d="M0 5 L4.5 0 H16 V5Z" fill="#ffd35c"/></svg>
<div class="t" style="left:270px;top:395.0px;font-size:10.8px;line-height:16px;font-weight:normal;color:#111;">Phone</div>
<svg style="left:250px;top:414px" width="16" height="10"><path d="M0 5 L4.5 0 H16 V10 H4.5Z" fill="#ffbf0f"/><path d="M0 5 L4.5 0 H16 V5Z" fill="#ffd35c"/></svg>
<div class="t" style="left:270px;top:411.0px;font-size:10.8px;line-height:16px;font-weight:normal;color:#111;">Fax</div>
<svg style="left:248px;top:429.2px" width="11" height="12"><rect x="0.75" y="0.75" width="9.5" height="10.2" rx="1" fill="#fff" stroke="#2a2a2a" stroke-width="1.5"/><path d="M2.8 5.85H8.2" stroke="#555" stroke-width="1.4"/></svg>
<svg style="left:262.3px;top:428px" width="15" height="14"><rect x="0" y="0" width="14.4" height="13.8" fill="#ffcf6e"/><rect x="2.4" y="2" width="4" height="4" fill="#d99420"/><rect x="8.2" y="2" width="4.4" height="4" fill="#d99420"/><rect x="2.4" y="8" width="4" height="4" fill="#d99420"/><rect x="8.2" y="8" width="4.4" height="4" fill="#d99420"/></svg>
<div class="t" style="left:282px;top:427.0px;font-size:10.7px;line-height:16px;font-weight:bold;color:#000;">Orders</div>
<svg style="left:262px;top:446px" width="16" height="10"><path d="M0 5 L4.5 0 H16 V10 H4.5Z" fill="#ffbf0f"/><path d="M0 5 L4.5 0 H16 V5Z" fill="#ffd35c"/></svg>
<div class="t" style="left:282px;top:443.0px;font-size:10.8px;line-height:16px;font-weight:normal;color:#111;">OrderID</div>
<svg style="left:262px;top:462px" width="16" height="10"><path d="M0 5 L4.5 0 H16 V10 H4.5Z" fill="#ffbf0f"/><path d="M0 5 L4.5 0 H16 V5Z" fill="#ffd35c"/></svg>
<div class="t" style="left:282px;top:459.0px;font-size:10.8px;line-height:16px;font-weight:normal;color:#111;">CustomerID</div>
<svg style="left:262px;top:478px" width="16" height="10"><path d="M0 5 L4.5 0 H16 V10 H4.5Z" fill="#ffbf0f"/><path d="M0 5 L4.5 0 H16 V5Z" fill="#ffd35c"/></svg>
<div class="t" style="left:282px;top:475.0px;font-size:10.8px;line-height:16px;font-weight:normal;color:#111;">EmployeeID</div>
<svg style="left:262px;top:494px" width="16" height="10"><path d="M0 5 L4.5 0 H16 V10 H4.5Z" fill="#ffbf0f"/><path d="M0 5 L4.5 0 H16 V5Z" fill="#ffd35c"/></svg>
<div class="t" style="left:282px;top:491.0px;font-size:10.8px;line-height:16px;font-weight:normal;color:#111;">OrderDate</div>
<svg style="left:262px;top:510px" width="16" height="10"><path d="M0 5 L4.5 0 H16 V10 H4.5Z" fill="#ffbf0f"/><path d="M0 5 L4.5 0 H16 V5Z" fill="#ffd35c"/></svg>
<div class="t" style="left:282px;top:507.0px;font-size:10.8px;line-height:16px;font-weight:normal;color:#111;">RequiredDate</div>
<svg style="left:262px;top:526px" width="16" height="10"><path d="M0 5 L4.5 0 H16 V10 H4.5Z" fill="#ffbf0f"/><path d="M0 5 L4.5 0 H16 V5Z" fill="#ffd35c"/></svg>
<div class="t" style="left:282px;top:523.0px;font-size:10.8px;line-height:16px;font-weight:normal;color:#111;">ShippedDate</div>
<svg style="left:262px;top:542px" width="16" height="10"><path d="M0 5 L4.5 0 H16 V10 H4.5Z" fill="#ffbf0f"/><path d="M0 5 L4.5 0 H16 V5Z" fill="#ffd35c"/></svg>
<div class="t" style="left:282px;top:539.0px;font-size:10.8px;line-height:16px;font-weight:normal;color:#111;">ShipVia</div>
<svg style="left:262px;top:558px" width="16" height="10"><path d="M0 5 L4.5 0 H16 V10 H4.5Z" fill="#ffbf0f"/><path d="M0 5 L4.5 0 H16 V5Z" fill="#ffd35c"/></svg>
<div class="t" style="left:282px;top:555.0px;font-size:10.8px;line-height:16px;font-weight:normal;color:#111;">Freight</div>
<svg style="left:262px;top:574px" width="16" height="10"><path d="M0 5 L4.5 0 H16 V10 H4.5Z" fill="#ffbf0f"/><path d="M0 5 L4.5 0 H16 V5Z" fill="#ffd35c"/></svg>
<div class="t" style="left:282px;top:571.0px;font-size:10.8px;line-height:16px;font-weight:normal;color:#111;">ShipName</div>
<svg style="left:262px;top:590px" width="16" height="10"><path d="M0 5 L4.5 0 H16 V10 H4.5Z" fill="#ffbf0f"/><path d="M0 5 L4.5 0 H16 V5Z" fill="#ffd35c"/></svg>
<div class="t" style="left:282px;top:587.0px;font-size:10.8px;line-height:16px;font-weight:normal;color:#111;">ShipAddress</div>
<svg style="left:262px;top:606px" width="16" height="10"><path d="M0 5 L4.5 0 H16 V10 H4.5Z" fill="#ffbf0f"/><path d="M0 5 L4.5 0 H16 V5Z" fill="#ffd35c"/></svg>
<div class="t" style="left:282px;top:603.0px;font-size:10.8px;line-height:16px;font-weight:normal;color:#111;">ShipCity</div>
<svg style="left:262px;top:622px" width="16" height="10"><path d="M0 5 L4.5 0 H16 V10 H4.5Z" fill="#ffbf0f"/><path d="M0 5 L4.5 0 H16 V5Z" fill="#ffd35c"/></svg>
<div class="t" style="left:282px;top:619.0px;font-size:10.8px;line-height:16px;font-weight:normal;color:#111;">ShipRegion</div>
<svg style="left:262px;top:638px" width="16" height="10"><path d="M0 5 L4.5 0 H16 V10 H4.5Z" fill="#ffbf0f"/><path d="M0 5 L4.5 0 H16 V5Z" fill="#ffd35c"/></svg>
<div class="t" style="left:282px;top:635.0px;font-size:10.8px;line-height:16px;font-weight:normal;color:#111;">ShipPostalCode</div>
<svg style="left:262px;top:654px" width="16" height="10"><path d="M0 5 L4.5 0 H16 V10 H4.5Z" fill="#ffbf0f"/><path d="M0 5 L4.5 0 H16 V5Z" fill="#ffd35c"/></svg>
<div class="t" style="left:282px;top:651.0px;font-size:10.8px;line-height:16px;font-weight:normal;color:#111;">ShipCountry</div>
<div class="a" style="left:556px;top:166px;width:218px;height:502px;background:#a3b5cb;border-radius:11px"></div>
<div class="a" style="left:552px;top:161px;width:218px;height:502px;background:#fff;border-radius:11px;overflow:hidden"><div class="a" style="left:0;top:0;width:218px;height:34px;background:#a983b9"></div><div class="a" style="left:0;top:34px;width:218px;height:1px;background:#a983b9;opacity:0.3"></div></div>
<div class="t" style="left:583.8px;top:169.5px;font-size:13.5px;line-height:18px;font-weight:bold;color:#fff;transform-origin:0 0;transform:scaleX(0.962)">PassthruTranformation</div>
<svg style="left:748px;top:171.0px" width="15" height="15"><circle cx="7.5" cy="7.5" r="7" fill="#76598a"/><path d="M3.5 10 L7.5 4 L11.5 10Z" fill="#fff"/></svg>
<svg style="left:560px;top:170.0px" width="18" height="17"><rect x="2.6" y="0.8" width="6.8" height="14.1" rx="0.8" fill="none" stroke="#74a6de" stroke-width="1.1"/><path d="M9.4 0.8H15.5V14.9H9.4" fill="none" stroke="#555" stroke-width="0.9" stroke-dasharray="1 1.1"/><path d="M4.8 7.8H10.5" stroke="#f29a3a" stroke-width="1.6"/><circle cx="12.2" cy="7.8" r="1.7" fill="none" stroke="#f29a3a" stroke-width="1.3"/><path d="M13.8 7.8H14.8" stroke="#f29a3a" stroke-width="1.2"/></svg>
<svg style="left:559px;top:198.2px" width="11" height="12"><rect x="0.75" y="0.75" width="9.5" height="10.2" rx="1" fill="#fff" stroke="#2a2a2a" stroke-width="1.5"/><path d="M2.8 5.85H8.2" stroke="#555" stroke-width="1.4"/></svg>
<svg style="left:574.7px;top:197px" width="15" height="14"><rect x="0" y="0" width="15" height="14" fill="#98e095"/><rect x="1.75" y="1.75" width="11.5" height="10.5" fill="#9fe39c" stroke="#55a757" stroke-width="1.5"/></svg>
<div class="t" style="left:594px;top:196.0px;font-size:10.7px;line-height:16px;font-weight:bold;color:#000;">PassthruTranformation</div>
<svg style="left:574px;top:215px" width="16" height="10"><path d="M0 5 L4.5 0 H16 V10 H4.5Z" fill="#ffbf0f"/><path d="M0 5 L4.5 0 H16 V5Z" fill="#ffd35c"/></svg>
<div class="t" style="left:593px;top:212.0px;font-size:10.8px;line-height:16px;font-weight:normal;color:#111;">CustomerID</div>
<svg style="left:574px;top:231px" width="16" height="10"><path d="M0 5 L4.5 0 H16 V10 H4.5Z" fill="#ffbf0f"/><path d="M0 5 L4.5 0 H16 V5Z" fill="#ffd35c"/></svg>
<div class="t" style="left:593px;top:228.0px;font-size:10.8px;line-height:16px;font-weight:normal;color:#111;">CompanyName</div>
<svg style="left:574px;top:247px" width="16" height="10"><path d="M0 5 L4.5 0 H16 V10 H4.5Z" fill="#ffbf0f"/><path d="M0 5 L4.5 0 H16 V5Z" fill="#ffd35c"/></svg>
<div class="t" style="left:593px;top:244.0px;font-size:10.8px;line-height:16px;font-weight:normal;color:#111;">ContactName</div>
<svg style="left:574px;top:263px" width="16" height="10"><path d="M0 5 L4.5 0 H16 V10 H4.5Z" fill="#ffbf0f"/><path d="M0 5 L4.5 0 H16 V5Z" fill="#ffd35c"/></svg>
<div class="t" style="left:593px;top:260.0px;font-size:10.8px;line-height:16px;font-weight:normal;color:#111;">ContactTitle</div>
<svg style="left:574px;top:279px" width="16" height="10"><path d="M0 5 L4.5 0 H16 V10 H4.5Z" fill="#ffbf0f"/><path d="M0 5 L4.5 0 H16 V5Z" fill="#ffd35c"/></svg>
<div class="t" style="left:593px;top:276.0px;font-size:10.8px;line-height:16px;font-weight:normal;color:#111;">Address</div>
<svg style="left:574px;top:295px" width="16" height="10"><path d="M0 5 L4.5 0 H16 V10 H4.5Z" fill="#ffbf0f"/><path d="M0 5 L4.5 0 H16 V5Z" fill="#ffd35c"/></svg>
<div class="t" style="left:593px;top:292.0px;font-size:10.8px;line-height:16px;font-weight:normal;color:#111;">City</div>
<svg style="left:574px;top:311px" width="16" height="10"><path d="M0 5 L4.5 0 H16 V10 H4.5Z" fill="#ffbf0f"/><path d="M0 5 L4.5 0 H16 V5Z" fill="#ffd35c"/></svg>
<div class="t" style="left:593px;top:308.0px;font-size:10.8px;line-height:16px;font-weight:normal;color:#111;">Region</div>
<svg style="left:574px;top:327px" width="16" height="10"><path d="M0 5 L4.5 0 H16 V10 H4.5Z" fill="#ffbf0f"/><path d="M0 5 L4.5 0 H16 V5Z" fill="#ffd35c"/></svg>
<div class="t" style="left:593px;top:324.0px;font-size:10.8px;line-height:16px;font-weight:normal;color:#111;">PostalCode</div>
<svg style="left:574px;top:343px" width="16" height="10"><path d="M0 5 L4.5 0 H16 V10 H4.5Z" fill="#ffbf0f"/><path d="M0 5 L4.5 0 H16 V5Z" fill="#ffd35c"/></svg>
<div class="t" style="left:593px;top:340.0px;font-size:10.8px;line-height:16px;font-weight:normal;color:#111;">Country</div>
<svg style="left:574px;top:359px" width="16" height="10"><path d="M0 5 L4.5 0 H16 V10 H4.5Z" fill="#ffbf0f"/><path d="M0 5 L4.5 0 H16 V5Z" fill="#ffd35c"/></svg>
<div class="t" style="left:593px;top:356.0px;font-size:10.8px;line-height:16px;font-weight:normal;color:#111;">Phone</div>
<svg style="left:574px;top:375px" width="16" height="10"><path d="M0 5 L4.5 0 H16 V10 H4.5Z" fill="#ffbf0f"/><path d="M0 5 L4.5 0 H16 V5Z" fill="#ffd35c"/></svg>
<div class="t" style="left:593px;top:372.0px;font-size:10.8px;line-height:16px;font-weight:normal;color:#111;">Fax</div>
<svg style="left:574px;top:391px" width="16" height="10"><path d="M0 5 L4.5 0 H16 V10 H4.5Z" fill="#ffbf0f"/><path d="M0 5 L4.5 0 H16 V5Z" fill="#ffd35c"/></svg>
<div class="t" style="left:593px;top:388.0px;font-size:10.8px;line-height:16px;font-weight:normal;color:#111;">LateOrders</div>
<svg style="left:574px;top:407px" width="16" height="10"><path d="M0 5 L4.5 0 H16 V10 H4.5Z" fill="#ffbf0f"/><path d="M0 5 L4.5 0 H16 V5Z" fill="#ffd35c"/></svg>
<div class="t" style="left:593px;top:404.0px;font-size:10.8px;line-height:16px;font-weight:normal;color:#111;">&lt;New Member&gt;</div>
<svg style="left:571px;top:422.2px" width="11" height="12"><rect x="0.75" y="0.75" width="9.5" height="10.2" rx="1" fill="#fff" stroke="#2a2a2a" stroke-width="1.5"/><path d="M2.8 5.85H8.2" stroke="#555" stroke-width="1.4"/><path d="M5.5 3V8.6" stroke="#444" stroke-width="1.3"/></svg>
<svg style="left:587.0px;top:421px" width="15" height="14"><rect x="0" y="0" width="14.4" height="13.8" fill="#ffcf6e"/><rect x="2.4" y="2" width="4" height="4" fill="#d99420"/><rect x="8.2" y="2" width="4.4" height="4" fill="#d99420"/><rect x="2.4" y="8" width="4" height="4" fill="#d99420"/><rect x="8.2" y="8" width="4.4" height="4" fill="#d99420"/></svg>
<div class="t" style="left:605px;top:420.0px;font-size:10.7px;line-height:16px;font-weight:bold;color:#000;">Orders</div>
<svg style="left:571px;top:438.2px" width="11" height="12"><rect x="0.75" y="0.75" width="9.5" height="10.2" rx="1" fill="#fff" stroke="#2a2a2a" stroke-width="1.5"/><path d="M2.8 5.85H8.2" stroke="#555" stroke-width="1.4"/></svg>
<svg style="left:587.0px;top:437px" width="15" height="14"><rect x="0" y="0" width="14.4" height="13.8" fill="#ffcf6e"/><rect x="2.4" y="2" width="4" height="4" fill="#d99420"/><rect x="8.2" y="2" width="4.4" height="4" fill="#d99420"/><rect x="2.4" y="8" width="4" height="4" fill="#d99420"/><rect x="8.2" y="8" width="4.4" height="4" fill="#d99420"/></svg>
<div class="t" style="left:605px;top:436.0px;font-size:10.7px;line-height:16px;font-weight:bold;color:#000;">Orders_LateArrivals</div>
<svg style="left:586px;top:455px" width="16" height="10"><path d="M0 5 L4.5 0 H16 V10 H4.5Z" fill="#ffbf0f"/><path d="M0 5 L4.5 0 H16 V5Z" fill="#ffd35c"/></svg>
<div class="t" style="left:605px;top:452.0px;font-size:10.8px;line-height:16px;font-weight:normal;color:#111;">OrderID</div>
<svg style="left:586px;top:471px" width="16" height="10"><path d="M0 5 L4.5 0 H16 V10 H4.5Z" fill="#ffbf0f"/><path d="M0 5 L4.5 0 H16 V5Z" fill="#ffd35c"/></svg>
<div class="t" style="left:605px;top:468.0px;font-size:10.8px;line-height:16px;font-weight:normal;color:#111;">CustomerID</div>
<svg style="left:586px;top:487px" width="16" height="10"><path d="M0 5 L4.5 0 H16 V10 H4.5Z" fill="#ffbf0f"/><path d="M0 5 L4.5 0 H16 V5Z" fill="#ffd35c"/></svg>
<div class="t" style="left:605px;top:484.0px;font-size:10.8px;line-height:16px;font-weight:normal;color:#111;">EmployeeID</div>
<svg style="left:586px;top:503px" width="16" height="10"><path d="M0 5 L4.5 0 H16 V10 H4.5Z" fill="#ffbf0f"/><path d="M0 5 L4.5 0 H16 V5Z" fill="#ffd35c"/></svg>
<div class="t" style="left:605px;top:500.0px;font-size:10.8px;line-height:16px;font-weight:normal;color:#111;">OrderDate</div>
<svg style="left:586px;top:519px" width="16" height="10"><path d="M0 5 L4.5 0 H16 V10 H4.5Z" fill="#ffbf0f"/><path d="M0 5 L4.5 0 H16 V5Z" fill="#ffd35c"/></svg>
<div class="t" style="left:605px;top:516.0px;font-size:10.8px;line-height:16px;font-weight:normal;color:#111;">RequiredDate</div>
<svg style="left:586px;top:535px" width="16" height="10"><path d="M0 5 L4.5 0 H16 V10 H4.5Z" fill="#ffbf0f"/><path d="M0 5 L4.5 0 H16 V5Z" fill="#ffd35c"/></svg>
<div class="t" style="left:605px;top:532.0px;font-size:10.8px;line-height:16px;font-weight:normal;color:#111;">ShippedDate</div>
<svg style="left:586px;top:551px" width="16" height="10"><path d="M0 5 L4.5 0 H16 V10 H4.5Z" fill="#ffbf0f"/><path d="M0 5 L4.5 0 H16 V5Z" fill="#ffd35c"/></svg>
<div class="t" style="left:605px;top:548.0px;font-size:10.8px;line-height:16px;font-weight:normal;color:#111;">ShipVia</div>
<svg style="left:586px;top:567px" width="16" height="10"><path d="M0 5 L4.5 0 H16 V10 H4.5Z" fill="#ffbf0f"/><path d="M0 5 L4.5 0 H16 V5Z" fill="#ffd35c"/></svg>
<div class="t" style="left:605px;top:564.0px;font-size:10.8px;line-height:16px;font-weight:normal;color:#111;">Freight</div>
<svg style="left:586px;top:583px" width="16" height="10"><path d="M0 5 L4.5 0 H16 V10 H4.5Z" fill="#ffbf0f"/><path d="M0 5 L4.5 0 H16 V5Z" fill="#ffd35c"/></svg>
<div class="t" style="left:605px;top:580.0px;font-size:10.8px;line-height:16px;font-weight:normal;color:#111;">ShipName</div>
<svg style="left:586px;top:599px" width="16" height="10"><path d="M0 5 L4.5 0 H16 V10 H4.5Z" fill="#ffbf0f"/><path d="M0 5 L4.5 0 H16 V5Z" fill="#ffd35c"/></svg>
<div class="t" style="left:605px;top:596.0px;font-size:10.8px;line-height:16px;font-weight:normal;color:#111;">ShipAddress</div>
<svg style="left:586px;top:615px" width="16" height="10"><path d="M0 5 L4.5 0 H16 V10 H4.5Z" fill="#ffbf0f"/><path d="M0 5 L4.5 0 H16 V5Z" fill="#ffd35c"/></svg>
<div class="t" style="left:605px;top:612.0px;font-size:10.8px;line-height:16px;font-weight:normal;color:#111;">ShipCity</div>
<svg style="left:586px;top:631px" width="16" height="10"><path d="M0 5 L4.5 0 H16 V10 H4.5Z" fill="#ffbf0f"/><path d="M0 5 L4.5 0 H16 V5Z" fill="#ffd35c"/></svg>
<div class="t" style="left:605px;top:628.0px;font-size:10.8px;line-height:16px;font-weight:normal;color:#111;">ShipRegion</div>
<svg style="left:586px;top:647px" width="16" height="10"><path d="M0 5 L4.5 0 H16 V10 H4.5Z" fill="#ffbf0f"/><path d="M0 5 L4.5 0 H16 V5Z" fill="#ffd35c"/></svg>
<div class="t" style="left:605px;top:644.0px;font-size:10.8px;line-height:16px;font-weight:normal;color:#111;">ShipPostalCode</div>
<div class="a" style="left:758px;top:211px;width:6px;height:419px;background:#c8c8c8"></div>
<svg style="left:756px;top:199px" width="10" height="8"><path d="M1 6.5 L5 1.5 L9 6.5Z" fill="#d2d2d2"/></svg>
<svg style="left:756px;top:651px" width="10" height="8"><path d="M1 1.5 L5 6.5 L9 1.5Z" fill="#d2d2d2"/></svg>
<div class="a" style="left:964px;top:245px;width:208px;height:307px;background:#a3b5cb;border-radius:11px"></div>
<div class="a" style="left:960px;top:240px;width:208px;height:307px;background:#fff;border-radius:11px;overflow:hidden"><div class="a" style="left:0;top:0;width:208px;height:34px;background:#c8af50"></div><div class="a" style="left:0;top:34px;width:208px;height:1px;background:#c8af50;opacity:0.3"></div></div>
<div class="t" style="left:991.8px;top:248.5px;font-size:13.5px;line-height:18px;font-weight:bold;color:#fff;transform-origin:0 0;transform:scaleX(0.94)">Data_Destinatination</div>
<svg style="left:1146px;top:250.0px" width="15" height="15"><circle cx="7.5" cy="7.5" r="7" fill="#8a7838"/><path d="M3.5 10 L7.5 4 L11.5 10Z" fill="#fff"/></svg>
<svg style="left:968px;top:249.0px" width="18" height="17"><path d="M0.8 0.9H8.6L11 3.3V14.7H0.8Z" fill="#fff" stroke="#9a9a9a" stroke-width="0.8"/><path d="M4.5 6.6 L10.8 5.6 V15.9 L4.5 14.6Z" fill="#1f7a45"/><rect x="11.9" y="6.7" width="3.9" height="8.1" rx="0.5" fill="#2a8a52"/><path d="M12.8 8H15 M12.8 9.6H15 M12.8 11.2H15 M12.8 12.8H15" stroke="#8fcaa4" stroke-width="0.6"/><path d="M6 8.4 L9 12.8 M9 8.4 L6 12.8" stroke="#e6f4ea" stroke-width="1.1"/></svg>
<svg style="left:967px;top:277.2px" width="11" height="12"><rect x="0.75" y="0.75" width="9.5" height="10.2" rx="1" fill="#fff" stroke="#2a2a2a" stroke-width="1.5"/><path d="M2.8 5.85H8.2" stroke="#555" stroke-width="1.4"/></svg>
<svg style="left:981px;top:276px" width="15" height="14"><rect x="0" y="0" width="15" height="14" fill="#98e095"/><rect x="1.75" y="1.75" width="11.5" height="10.5" fill="#9fe39c" stroke="#55a757" stroke-width="1.5"/></svg>
<div class="t" style="left:1002px;top:275.0px;font-size:10.7px;line-height:16px;font-weight:bold;color:#000;">Data_Destinatination</div>
<svg style="left:981px;top:294px" width="16" height="10"><path d="M0 5 L4.5 0 H16 V10 H4.5Z" fill="#ffbf0f"/><path d="M0 5 L4.5 0 H16 V5Z" fill="#ffd35c"/></svg>
<div class="t" style="left:1001px;top:291.0px;font-size:10.8px;line-height:16px;font-weight:normal;color:#111;">OrderID</div>
<svg style="left:981px;top:310px" width="16" height="10"><path d="M0 5 L4.5 0 H16 V10 H4.5Z" fill="#ffbf0f"/><path d="M0 5 L4.5 0 H16 V5Z" fill="#ffd35c"/></svg>
<div class="t" style="left:1001px;top:307.0px;font-size:10.8px;line-height:16px;font-weight:normal;color:#111;">CustomerID</div>
<svg style="left:981px;top:326px" width="16" height="10"><path d="M0 5 L4.5 0 H16 V10 H4.5Z" fill="#ffbf0f"/><path d="M0 5 L4.5 0 H16 V5Z" fill="#ffd35c"/></svg>
<div class="t" style="left:1001px;top:323.0px;font-size:10.8px;line-height:16px;font-weight:normal;color:#111;">EmployeeID</div>
<svg style="left:981px;top:342px" width="16" height="10"><path d="M0 5 L4.5 0 H16 V10 H4.5Z" fill="#ffbf0f"/><path d="M0 5 L4.5 0 H16 V5Z" fill="#ffd35c"/></svg>
<div class="t" style="left:1001px;top:339.0px;font-size:10.8px;line-height:16px;font-weight:normal;color:#111;">OrderDate</div>
<svg style="left:981px;top:358px" width="16" height="10"><path d="M0 5 L4.5 0 H16 V10 H4.5Z" fill="#ffbf0f"/><path d="M0 5 L4.5 0 H16 V5Z" fill="#ffd35c"/></svg>
<div class="t" style="left:1001px;top:355.0px;font-size:10.8px;line-height:16px;font-weight:normal;color:#111;">RequiredDate</div>
<svg style="left:981px;top:374px" width="16" height="10"><path d="M0 5 L4.5 0 H16 V10 H4.5Z" fill="#ffbf0f"/><path d="M0 5 L4.5 0 H16 V5Z" fill="#ffd35c"/></svg>
<div class="t" style="left:1001px;top:371.0px;font-size:10.8px;line-height:16px;font-weight:normal;color:#111;">ShippedDate</div>
<svg style="left:981px;top:390px" width="16" height="10"><path d="M0 5 L4.5 0 H16 V10 H4.5Z" fill="#ffbf0f"/><path d="M0 5 L4.5 0 H16 V5Z" fill="#ffd35c"/></svg>
<div class="t" style="left:1001px;top:387.0px;font-size:10.8px;line-height:16px;font-weight:normal;color:#111;">ShipVia</div>
<svg style="left:981px;top:406px" width="16" height="10"><path d="M0 5 L4.5 0 H16 V10 H4.5Z" fill="#ffbf0f"/><path d="M0 5 L4.5 0 H16 V5Z" fill="#ffd35c"/></svg>
<div class="t" style="left:1001px;top:403.0px;font-size:10.8px;line-height:16px;font-weight:normal;color:#111;">Freight</div>
<svg style="left:981px;top:422px" width="16" height="10"><path d="M0 5 L4.5 0 H16 V10 H4.5Z" fill="#ffbf0f"/><path d="M0 5 L4.5 0 H16 V5Z" fill="#ffd35c"/></svg>
<div class="t" style="left:1001px;top:419.0px;font-size:10.8px;line-height:16px;font-weight:normal;color:#111;">ShipName</div>
<svg style="left:981px;top:438px" width="16" height="10"><path d="M0 5 L4.5 0 H16 V10 H4.5Z" fill="#ffbf0f"/><path d="M0 5 L4.5 0 H16 V5Z" fill="#ffd35c"/></svg>
<div class="t" style="left:1001px;top:435.0px;font-size:10.8px;line-height:16px;font-weight:normal;color:#111;">ShipAddress</div>
<svg style="left:981px;top:454px" width="16" height="10"><path d="M0 5 L4.5 0 H16 V10 H4.5Z" fill="#ffbf0f"/><path d="M0 5 L4.5 0 H16 V5Z" fill="#ffd35c"/></svg>
<div class="t" style="left:1001px;top:451.0px;font-size:10.8px;line-height:16px;font-weight:normal;color:#111;">ShipCity</div>
<svg style="left:981px;top:470px" width="16" height="10"><path d="M0 5 L4.5 0 H16 V10 H4.5Z" fill="#ffbf0f"/><path d="M0 5 L4.5 0 H16 V5Z" fill="#ffd35c"/></svg>
<div class="t" style="left:1001px;top:467.0px;font-size:10.8px;line-height:16px;font-weight:normal;color:#111;">ShipRegion</div>
<svg style="left:981px;top:486px" width="16" height="10"><path d="M0 5 L4.5 0 H16 V10 H4.5Z" fill="#ffbf0f"/><path d="M0 5 L4.5 0 H16 V5Z" fill="#ffd35c"/></svg>
<div class="t" style="left:1001px;top:483.0px;font-size:10.8px;line-height:16px;font-weight:normal;color:#111;">ShipPostalCode</div>
<svg style="left:981px;top:502px" width="16" height="10"><path d="M0 5 L4.5 0 H16 V10 H4.5Z" fill="#ffbf0f"/><path d="M0 5 L4.5 0 H16 V5Z" fill="#ffd35c"/></svg>
<div class="t" style="left:1001px;top:499.0px;font-size:10.8px;line-height:16px;font-weight:normal;color:#111;">ShipCountry</div>
<svg style="left:981px;top:518px" width="16" height="10"><path d="M0 5 L4.5 0 H16 V10 H4.5Z" fill="#ffbf0f"/><path d="M0 5 L4.5 0 H16 V5Z" fill="#ffd35c"/></svg>
<div class="t" style="left:1001px;top:515.0px;font-size:10.8px;line-height:16px;font-weight:normal;color:#111;">&lt;New Member&gt;</div>
<svg style="left:0;top:0" width="1195" height="688"><rect x="427.5" y="240.5" width="12" height="5" fill="#fff" stroke="#cdd3db" stroke-width="1"/><rect x="427" y="255.5" width="12" height="7" fill="#66c28a"/><rect x="427" y="271.5" width="12" height="7" fill="#66c28a"/><rect x="427" y="287.5" width="12" height="7" fill="#66c28a"/><rect x="427" y="303.5" width="12" height="7" fill="#66c28a"/><rect x="427" y="319.5" width="12" height="7" fill="#66c28a"/><rect x="427" y="335.5" width="12" height="7" fill="#66c28a"/><rect x="427" y="351.5" width="12" height="7" fill="#66c28a"/><rect x="427" y="367.5" width="12" height="7" fill="#66c28a"/><rect x="427" y="383.5" width="12" height="7" fill="#66c28a"/><rect x="427" y="399.5" width="12" height="7" fill="#66c28a"/><rect x="427" y="415.5" width="12" height="7" fill="#66c28a"/><rect x="427.5" y="432.5" width="12" height="5" fill="#fff" stroke="#cdd3db" stroke-width="1"/><rect x="427" y="447.5" width="12" height="7" fill="#66c28a"/><rect x="427" y="463.5" width="12" height="7" fill="#66c28a"/><rect x="427" y="479.5" width="12" height="7" fill="#66c28a"/><rect x="427" y="495.5" width="12" height="7" fill="#66c28a"/><rect x="427" y="511.5" width="12" height="7" fill="#66c28a"/><rect x="427" y="527.5" width="12" height="7" fill="#66c28a"/><rect x="427" y="543.5" width="12" height="7" fill="#66c28a"/><rect x="427" y="559.5" width="12" height="7" fill="#66c28a"/><rect x="427" y="575.5" width="12" height="7" fill="#66c28a"/><rect x="427" y="591.5" width="12" height="7" fill="#66c28a"/><rect x="427" y="607.5" width="12" height="7" fill="#66c28a"/><rect x="427" y="623.5" width="12" height="7" fill="#66c28a"/><rect x="427" y="639.5" width="12" height="7" fill="#66c28a"/><rect x="427" y="655.5" width="12" height="7" fill="#66c28a"/><path d="M539.5 201.2 L552 204 L539.5 206.8Z" fill="#fff" stroke="#d5dbe3" stroke-width="0.7"/><path d="M539 216.5 L552 220 L539 223.5Z" fill="#66c28a"/><path d="M539 232.5 L552 236 L539 239.5Z" fill="#66c28a"/><path d="M539 248.5 L552 252 L539 255.5Z" fill="#66c28a"/><path d="M539 264.5 L552 268 L539 271.5Z" fill="#66c28a"/><path d="M539 280.5 L552 284 L539 287.5Z" fill="#66c28a"/><path d="M539 296.5 L552 300 L539 303.5Z" fill="#66c28a"/><path d="M539 312.5 L552 316 L539 319.5Z" fill="#66c28a"/><path d="M539 328.5 L552 332 L539 335.5Z" fill="#66c28a"/><path d="M539 344.5 L552 348 L539 351.5Z" fill="#66c28a"/><path d="M539 360.5 L552 364 L539 367.5Z" fill="#66c28a"/><path d="M539 376.5 L552 380 L539 383.5Z" fill="#66c28a"/><path d="M539.5 409.2 L552 412 L539.5 414.8Z" fill="#fff" stroke="#d5dbe3" stroke-width="0.7"/><path d="M539.5 425.2 L552 428 L539.5 430.8Z" fill="#fff" stroke="#d5dbe3" stroke-width="0.7"/><path d="M539.5 457.2 L552 460 L539.5 462.8Z" fill="#fff" stroke="#d5dbe3" stroke-width="0.7"/><path d="M539.5 473.2 L552 476 L539.5 478.8Z" fill="#fff" stroke="#d5dbe3" stroke-width="0.7"/><path d="M539.5 489.2 L552 492 L539.5 494.8Z" fill="#fff" stroke="#d5dbe3" stroke-width="0.7"/><path d="M539.5 505.2 L552 508 L539.5 510.8Z" fill="#fff" stroke="#d5dbe3" stroke-width="0.7"/><path d="M539.5 521.2 L552 524 L539.5 526.8Z" fill="#fff" stroke="#d5dbe3" stroke-width="0.7"/><path d="M539.5 537.2 L552 540 L539.5 542.8Z" fill="#fff" stroke="#d5dbe3" stroke-width="0.7"/><path d="M539.5 553.2 L552 556 L539.5 558.8Z" fill="#fff" stroke="#d5dbe3" stroke-width="0.7"/><path d="M539.5 569.2 L552 572 L539.5 574.8Z" fill="#fff" stroke="#d5dbe3" stroke-width="0.7"/><path d="M539.5 585.2 L552 588 L539.5 590.8Z" fill="#fff" stroke="#d5dbe3" stroke-width="0.7"/><path d="M539.5 601.2 L552 604 L539.5 606.8Z" fill="#fff" stroke="#d5dbe3" stroke-width="0.7"/><path d="M539.5 617.2 L552 620 L539.5 622.8Z" fill="#fff" stroke="#d5dbe3" stroke-width="0.7"/><path d="M539.5 633.2 L552 636 L539.5 638.8Z" fill="#fff" stroke="#d5dbe3" stroke-width="0.7"/><path d="M539.5 649.2 L552 652 L539.5 654.8Z" fill="#fff" stroke="#d5dbe3" stroke-width="0.7"/><rect x="770.5" y="201.5" width="12" height="5" fill="#fff" stroke="#cdd3db" stroke-width="1"/><rect x="770.5" y="217.5" width="12" height="5" fill="#fff" stroke="#cdd3db" stroke-width="1"/><rect x="770.5" y="233.5" width="12" height="5" fill="#fff" stroke="#cdd3db" stroke-width="1"/><rect x="770.5" y="249.5" width="12" height="5" fill="#fff" stroke="#cdd3db" stroke-width="1"/><rect x="770.5" y="265.5" width="12" height="5" fill="#fff" stroke="#cdd3db" stroke-width="1"/><rect x="770.5" y="281.5" width="12" height="5" fill="#fff" stroke="#cdd3db" stroke-width="1"/><rect x="770.5" y="297.5" width="12" height="5" fill="#fff" stroke="#cdd3db" stroke-width="1"/><rect x="770.5" y="313.5" width="12" height="5" fill="#fff" stroke="#cdd3db" stroke-width="1"/><rect x="770.5" y="329.5" width="12" height="5" fill="#fff" stroke="#cdd3db" stroke-width="1"/><rect x="770.5" y="345.5" width="12" height="5" fill="#fff" stroke="#cdd3db" stroke-width="1"/><rect x="770.5" y="361.5" width="12" height="5" fill="#fff" stroke="#cdd3db" stroke-width="1"/><rect x="770.5" y="377.5" width="12" height="5" fill="#fff" stroke="#cdd3db" stroke-width="1"/><rect x="770.5" y="393.5" width="12" height="5" fill="#fff" stroke="#cdd3db" stroke-width="1"/><rect x="770.5" y="425.5" width="12" height="5" fill="#fff" stroke="#cdd3db" stroke-width="1"/><rect x="770.5" y="441.5" width="12" height="5" fill="#fff" stroke="#cdd3db" stroke-width="1"/><rect x="770" y="456.5" width="12" height="7" fill="#b07fc0"/><rect x="770" y="472.5" width="12" height="7" fill="#b07fc0"/><rect x="770" y="488.5" width="12" height="7" fill="#b07fc0"/><rect x="770" y="504.5" width="12" height="7" fill="#b07fc0"/><rect x="770" y="520.5" width="12" height="7" fill="#b07fc0"/><rect x="770" y="536.5" width="12" height="7" fill="#b07fc0"/><rect x="770" y="552.5" width="12" height="7" fill="#b07fc0"/><rect x="770" y="568.5" width="12" height="7" fill="#b07fc0"/><rect x="770" y="584.5" width="12" height="7" fill="#b07fc0"/><rect x="770" y="600.5" width="12" height="7" fill="#b07fc0"/><rect x="770" y="616.5" width="12" height="7" fill="#b07fc0"/><rect x="770" y="632.5" width="12" height="7" fill="#b07fc0"/><rect x="770" y="648.5" width="12" height="7" fill="#b07fc0"/><path d="M947.5 280.2 L960 283 L947.5 285.8Z" fill="#fff" stroke="#d5dbe3" stroke-width="0.7"/><path d="M947 295.5 L960 299 L947 302.5Z" fill="#b07fc0"/><path d="M947 311.5 L960 315 L947 318.5Z" fill="#b07fc0"/><path d="M947 327.5 L960 331 L947 334.5Z" fill="#b07fc0"/><path d="M947 343.5 L960 347 L947 350.5Z" fill="#b07fc0"/><path d="M947 359.5 L960 363 L947 366.5Z" fill="#b07fc0"/><path d="M947 375.5 L960 379 L947 382.5Z" fill="#b07fc0"/><path d="M947 391.5 L960 395 L947 398.5Z" fill="#b07fc0"/><path d="M947 407.5 L960 411 L947 414.5Z" fill="#b07fc0"/><path d="M947 423.5 L960 427 L947 430.5Z" fill="#b07fc0"/><path d="M947 439.5 L960 443 L947 446.5Z" fill="#b07fc0"/><path d="M947 455.5 L960 459 L947 462.5Z" fill="#b07fc0"/><path d="M947 471.5 L960 475 L947 478.5Z" fill="#b07fc0"/><path d="M947 487.5 L960 491 L947 494.5Z" fill="#b07fc0"/><path d="M947 503.5 L960 507 L947 510.5Z" fill="#b07fc0"/><path d="M947.5 520.2 L960 523 L947.5 525.8Z" fill="#fff" stroke="#d5dbe3" stroke-width="0.7"/><rect x="1168.5" y="280.5" width="12" height="5" fill="#fff" stroke="#cdd3db" stroke-width="1"/><rect x="1168.5" y="296.5" width="12" height="5" fill="#fff" stroke="#cdd3db" stroke-width="1"/><rect x="1168.5" y="312.5" width="12" height="5" fill="#fff" stroke="#cdd3db" stroke-width="1"/><rect x="1168.5" y="328.5" width="12" height="5" fill="#fff" stroke="#cdd3db" stroke-width="1"/><rect x="1168.5" y="344.5" width="12" height="5" fill="#fff" stroke="#cdd3db" stroke-width="1"/><rect x="1168.5" y="360.5" width="12" height="5" fill="#fff" stroke="#cdd3db" stroke-width="1"/><rect x="1168.5" y="376.5" width="12" height="5" fill="#fff" stroke="#cdd3db" stroke-width="1"/><rect x="1168.5" y="392.5" width="12" height="5" fill="#fff" stroke="#cdd3db" stroke-width="1"/><rect x="1168.5" y="408.5" width="12" height="5" fill="#fff" stroke="#cdd3db" stroke-width="1"/><rect x="1168.5" y="424.5" width="12" height="5" fill="#fff" stroke="#cdd3db" stroke-width="1"/><rect x="1168.5" y="440.5" width="12" height="5" fill="#fff" stroke="#cdd3db" stroke-width="1"/><rect x="1168.5" y="456.5" width="12" height="5" fill="#fff" stroke="#cdd3db" stroke-width="1"/><rect x="1168.5" y="472.5" width="12" height="5" fill="#fff" stroke="#cdd3db" stroke-width="1"/><rect x="1168.5" y="488.5" width="12" height="5" fill="#fff" stroke="#cdd3db" stroke-width="1"/><rect x="1168.5" y="504.5" width="12" height="5" fill="#fff" stroke="#cdd3db" stroke-width="1"/><path d="M439 259 H449 L529 220 H540 M439 275 H449 L529 236 H540 M439 291 H449 L529 252 H540 M439 307 H449 L529 268 H540 M439 323 H449 L529 284 H540 M439 339 H449 L529 300 H540 M439 355 H449 L529 316 H540 M439 371 H449 L529 332 H540 M439 387 H449 L529 348 H540 M439 403 H449 L529 364 H540 M439 419 H449 L529 380 H540 M439 451 H449 L529 428 H540 M439 467 H449 L529 428 H540 M439 483 H449 L529 428 H540 M439 499 H449 L529 428 H540 M439 515 H449 L529 428 H540 M439 531 H449 L529 428 H540 M439 547 H449 L529 428 H540 M439 563 H449 L529 428 H540 M439 579 H449 L529 428 H540 M439 595 H449 L529 428 H540 M439 611 H449 L529 428 H540 M439 627 H449 L529 428 H540 M439 643 H449 L529 428 H540 M439 659 H449 L529 428 H540" stroke="#5fc386" stroke-width="1" fill="none"/><path d="M782 460 H792 L937 299 H948 M782 476 H792 L937 315 H948 M782 492 H792 L937 331 H948 M782 508 H792 L937 347 H948 M782 524 H792 L937 363 H948 M782 540 H792 L937 379 H948 M782 556 H792 L937 395 H948 M782 572 H792 L937 411 H948 M782 588 H792 L937 427 H948 M782 604 H792 L937 443 H948 M782 620 H792 L937 459 H948 M782 636 H792 L937 475 H948 M782 652 H792 L937 491 H948 M782 652 H792 L937 507 H948" stroke="#b384c4" stroke-width="1" fill="none"/></svg></body></html>
